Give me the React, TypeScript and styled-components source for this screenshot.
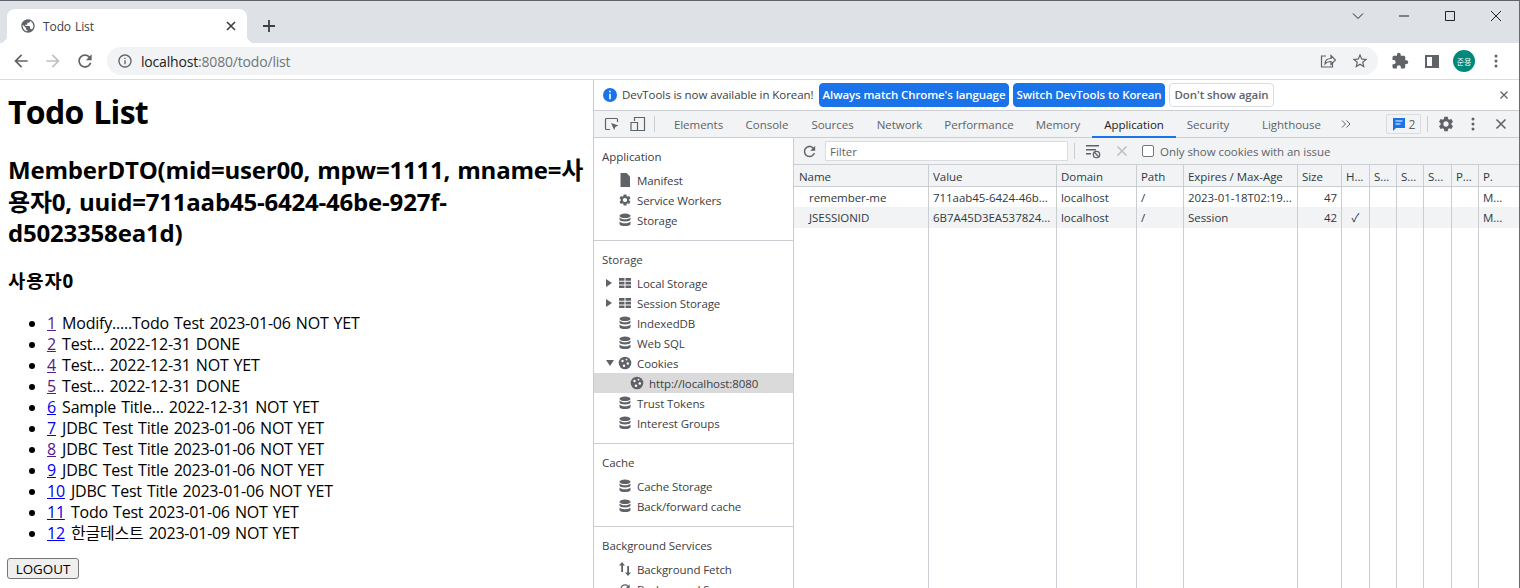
import React from "react";
import styled, { createGlobalStyle } from "styled-components";

const UI = `"Open Sans", "Noto Sans CJK KR", sans-serif`;

const Global = createGlobalStyle`
  html, body { margin: 0; padding: 0; height: 588px; overflow: hidden; background: #fff; }
  #root { height: 588px; }
`;

const Windowed = styled.div`
  height: 588px; box-sizing: border-box; display: flex; flex-direction: column; overflow: hidden;
  border-top: 1px solid #5f6368; border-right: 1px solid #6b6b6b; font-family: ${UI}; background: #fff;
`;
const TabStrip = styled.div`
  height: 42px; flex: none; background: #dee1e6; display: flex; align-items: flex-end; padding-left: 7px;
`;
const BrowserTab = styled.div`
  position: relative; width: 240px; height: 34px; box-sizing: border-box; background: #fff;
  border-radius: 8px 8px 0 0; display: flex; align-items: center; padding: 0 10px 0 13px; gap: 7px;
  &::before, &::after { content: ""; position: absolute; bottom: 0; width: 8px; height: 8px; }
  &::before { left: -8px; background: radial-gradient(circle at 0 0, #dee1e6 8px, #fff 8.5px); }
  &::after { right: -8px; background: radial-gradient(circle at 100% 0, #dee1e6 8px, #fff 8.5px); }
`;
const TabTitle = styled.span`
  flex: 1; font-size: 12px; color: #3c4043; letter-spacing: -0.1px; word-spacing: 1px;
`;
const NewTab = styled.div`
  margin: 0 0 3px 8px; width: 28px; height: 28px; display: flex; align-items: center; justify-content: center;
`;
const WinControls = styled.div`
  margin-left: auto; align-self: flex-start; display: flex;
`;
const WinBtn = styled.div`
  width: 46px; height: 30px; display: flex; align-items: center; justify-content: center;
`;
const Toolbar = styled.div`
  height: 37px; flex: none; box-sizing: border-box; display: flex; align-items: center; padding: 0 0 0 5px;
  background: #fff; border-bottom: 1px solid #dadce0;
`;
const NavBtn = styled.div`
  width: 32px; height: 28px; display: flex; align-items: center; justify-content: center; flex: none;
`;
const Omnibox = styled.div`
  margin-left: 6px; width: 1271px; height: 28px; flex: none; box-sizing: border-box; background: #f1f3f4; border-radius: 14px;
  display: flex; align-items: center; padding: 0 9px 0 10px;
`;
const Url = styled.span`
  margin-left: 8px; font-size: 14px; color: #70757a; letter-spacing: -0.18px; flex: 1;
  b { font-weight: 400; color: #202124; }
`;
const OmniIcons = styled.div`
  display: flex; align-items: center; gap: 15px;
`;
const ToolIcons = styled.div`
  flex: 1; display: flex; align-items: center; padding-left: 6px;
`;
const ToolCell = styled.div`
  width: 32px; height: 28px; flex: none; display: flex; align-items: center; justify-content: center;
`;
const Avatar = styled.div`
  width: 22px; height: 22px; border-radius: 50%; background: #00897b; color: #fff; font-size: 8px; flex: none;
  display: flex; align-items: center; justify-content: center; font-family: "Noto Sans CJK KR", sans-serif;
`;
const Main = styled.div`
  flex: 1; min-height: 0; display: flex;
`;
const PagePane = styled.div`
  width: 593px; flex: none; box-sizing: border-box; padding: 0 8px; font-family: ${UI};
  color: #000; font-size: 16px; overflow: hidden;
`;
const H1 = styled.h1`
  margin: 10px 0 0; font-size: 32px; line-height: 43px; font-weight: 700; letter-spacing: -0.7px; word-spacing: 2px;
`;
const H2 = styled.h2`
  margin: 21px 0 0; font-size: 24px; line-height: 31.7px; font-weight: 700; letter-spacing: -0.2px; word-spacing: 1px;
`;
const H3 = styled.h3`
  margin: 19px 0 0; font-size: 18.72px; line-height: 25px; font-weight: 700; letter-spacing: 1px;
`;
const List = styled.ul`
  margin: 20px 0 0; padding: 0 0 0 39px;
`;
const Item = styled.li`
  line-height: 21px; height: 21px; letter-spacing: -0.22px; word-spacing: 1.2px; white-space: nowrap;
`;
const NumLink = styled.a<{ $visited?: boolean }>`
  margin-right: 1px; color: ${(p) => (p.$visited ? "#551a8b" : "#0000ee")}; text-decoration: underline;
`;
const Logout = styled.button`
  display: block; margin: 14px 0 0 -1px; width: 72px; height: 21px; padding: 0; box-sizing: border-box;
  font-family: "Open Sans", sans-serif; font-size: 13.33px; letter-spacing: 0.05px; color: #000; background: #efefef;
  border: 1px solid #767676; border-radius: 3px;
`;
const DevTools = styled.div`
  flex: 1; min-width: 0; display: flex; flex-direction: column; border-left: 1px solid #cacdd1;
  font-size: 11.5px; color: #202124; margin-left: 0;
`;
const Infobar = styled.div`
  height: 31px; flex: none; box-sizing: border-box; border-bottom: 1px solid #cacdd1; display: flex; align-items: center; padding: 0 10px 1px 8px;
`;
const InfoText = styled.span`
  margin-left: 4px; width: 197px; color: #3c4043; font-size: 11.5px; letter-spacing: -0.07px; white-space: nowrap; flex: none;
`;
const InfoBtn = styled.div<{ $w: number; $primary?: boolean }>`
  width: ${(p) => p.$w}px; height: 24px; flex: none; margin-right: 4px; box-sizing: border-box; border-radius: 4px;
  display: flex; align-items: center; justify-content: center; white-space: nowrap; font-size: 11.5px; font-weight: 600;
  letter-spacing: -0.1px;
  background: ${(p) => (p.$primary ? "#1a73e8" : "#fff")};
  color: ${(p) => (p.$primary ? "#fff" : "#5f6368")};
  border: 1px solid ${(p) => (p.$primary ? "#1a73e8" : "#dadce0")};
`;
const InfoClose = styled.div`
  margin-left: auto; display: flex;
`;
const TabBar = styled.div`
  height: 27px; flex: none; box-sizing: border-box; background: #f1f3f4; border-bottom: 1px solid #cacdd1; display: flex; align-items: stretch; padding-left: 5px;
`;
const IconCell = styled.div<{ $w: number }>`
  width: ${(p) => p.$w}px; flex: none; display: flex; align-items: center; justify-content: center;
`;
const VSep = styled.div`
  width: 1px; height: 16px; background: #cacdd1; align-self: center; flex: none;
`;
const DTab = styled.div<{ $w: number; $active?: boolean }>`
  width: ${(p) => p.$w}px; flex: none; box-sizing: border-box; display: flex; align-items: center; justify-content: center;
  color: ${(p) => (p.$active ? "#202124" : "#5f6368")}; white-space: nowrap; letter-spacing: -0.03px;
  border-bottom: 2px solid ${(p) => (p.$active ? "#1a73e8" : "transparent")}; padding-top: 2px; margin-bottom: -1px;
`;
const Badge = styled.div`
  width: 35px; height: 20px; flex: none; align-self: center; margin-left: 31px; box-sizing: border-box; border: 1px solid #dadce0; border-radius: 2px;
  display: flex; align-items: center; justify-content: center; gap: 3px; color: #5f6368; font-size: 12px;
`;
const Panels = styled.div`
  flex: 1; min-height: 0; display: flex;
`;
const Sidebar = styled.div`
  width: 200px; flex: none; box-sizing: border-box; border-right: 1px solid #cacdd1; overflow: hidden;
`;
const Section = styled.div`
  padding-top: 9px; padding-bottom: 10px; border-bottom: 1px solid #cacdd1;
  &:last-child { border-bottom: none; }
`;
const SectionTitle = styled.div`
  height: 20px; line-height: 20px; padding-left: 8px; margin-bottom: 3px; color: #3c4043; letter-spacing: -0.05px;
`;
const TreeRow = styled.div<{ $selected?: boolean; $indent?: number }>`
  height: 20px; display: flex; align-items: center; box-sizing: border-box; color: #3c4043; white-space: nowrap; letter-spacing: -0.1px;
  padding-left: ${(p) => p.$indent ?? 24}px;
  background: ${(p) => (p.$selected ? "#dadada" : "transparent")};
`;
const Arrow = styled.div`
  width: 12px; margin-left: -12px; flex: none; display: flex; align-items: center; justify-content: flex-start;
`;
const TreeIcon = styled.div`
  width: 14px; height: 14px; margin-right: 5px; flex: none; display: flex; align-items: center; justify-content: center;
`;
const Content = styled.div`
  flex: 1; min-width: 0; display: flex; flex-direction: column;
`;
const CookieBar = styled.div`
  height: 27px; flex: none; box-sizing: border-box; background: #f1f3f4; border-bottom: 1px solid #cacdd1; display: flex; align-items: center; padding-left: 7px;
`;
const FilterInput = styled.div`
  width: 243px; height: 20px; margin-left: 7px; box-sizing: border-box; background: #fff; border: 1px solid #dadce0; display: flex; align-items: center; padding: 1px 0 0 4px; color: #5f6368; flex: none;
`;
const CheckBox = styled.span`
  width: 12px; height: 12px; box-sizing: border-box; border: 1px solid #767676; border-radius: 2px; background: #fff; flex: none; margin-left: 4px;
`;
const CheckLabel = styled.span`
  margin-left: 6px; color: #5f6368; white-space: nowrap; letter-spacing: -0.05px;
`;
const TableWrap = styled.div`
  flex: 1; min-height: 0;
`;
const Table = styled.table`
  border-collapse: separate; border-spacing: 0; table-layout: fixed; width: 100%; height: 100%;
`;
const Th = styled.th`
  height: 22px; box-sizing: border-box; padding: 1px 4px 0; background: #f1f3f4; font-weight: 400; text-align: left; color: #303942;
  border-right: 1px solid #cacdd1; border-bottom: 1px solid #cacdd1; white-space: nowrap; overflow: hidden; letter-spacing: -0.05px;
  &:first-child { padding-left: 5px; }
  &:last-child { border-right: none; }
`;
const Td = styled.td<{ $align?: string; $indent?: boolean; $alt?: boolean }>`
  height: ${(p) => (p.$alt ? 21 : 20)}px; box-sizing: border-box; padding: ${(p) => (p.$alt ? "0 4px 1px" : "1px 4px 0")}; padding-left: ${(p) => (p.$indent ? "15px" : "4px")}; color: #303942; white-space: nowrap; overflow: hidden;
  border-right: 1px solid #cacdd1; text-align: ${(p) => p.$align ?? "left"}; letter-spacing: -0.05px;
  background: ${(p) => (p.$alt ? "#f1f3f4" : "#fff")};
  &:last-child { border-right: none; }
`;
const Filler = styled.td`
  border-right: 1px solid #cacdd1;
  &:last-child { border-right: none; }
`;

const I = ({ d, s = 24, c = "#5f6368", v = 24 }: { d: string; s?: number; c?: string; v?: number }) => (
  <svg width={s} height={s} viewBox={`0 0 ${v} ${v}`} fill={c}><path d={d} /></svg>
);
const P = {
  back: "M20 11H7.83l5.59-5.59L12 4l-8 8 8 8 1.41-1.41L7.83 13H20v-2z",
  fwd: "M12 4l-1.41 1.41L16.17 11H4v2h12.17l-5.58 5.59L12 20l8-8z",
  refresh: "M17.65 6.35C16.2 4.9 14.21 4 12 4c-4.42 0-7.99 3.58-7.99 8s3.57 8 7.99 8c3.73 0 6.84-2.55 7.73-6h-2.08c-.82 2.33-3.04 4-5.65 4-3.31 0-6-2.69-6-6s2.69-6 6-6c1.66 0 3.14.69 4.22 1.78L13 11h7V4l-2.35 2.35z",
  info: "M11 7h2v2h-2zm0 4h2v6h-2zm1-9C6.48 2 2 6.48 2 12s4.48 10 10 10 10-4.48 10-10S17.52 2 12 2zm0 18c-4.41 0-8-3.59-8-8s3.59-8 8-8 8 3.59 8 8-3.59 8-8 8z",
  globe: "M12 2C6.48 2 2 6.48 2 12s4.48 10 10 10 10-4.48 10-10S17.52 2 12 2zm-1 17.93c-3.95-.49-7-3.85-7-7.93 0-.62.08-1.21.21-1.79L9 15v1c0 1.1.9 2 2 2v1.93zm6.9-2.54c-.26-.81-1-1.39-1.9-1.39h-1v-3c0-.55-.45-1-1-1H8v-2h2c.55 0 1-.45 1-1V7h2c1.1 0 2-.9 2-2v-.41c2.93 1.19 5 4.06 5 7.41 0 2.08-.8 3.97-2.1 5.39z",
  star: "M22 9.24l-7.19-.62L12 2 9.19 8.63 2 9.24l5.46 4.73L5.82 21 12 17.27 18.18 21l-1.63-7.03L22 9.24zM12 15.4l-3.76 2.27 1-4.28-3.32-2.88 4.38-.38L12 6.1l1.71 4.04 4.38.38-3.32 2.88 1 4.28L12 15.4z",
  ext: "M20.5 11H19V7c0-1.1-.9-2-2-2h-4V3.5C13 2.12 11.88 1 10.5 1S8 2.12 8 3.5V5H4c-1.1 0-1.99.9-1.99 2v3.8H3.5c1.49 0 2.7 1.21 2.7 2.7s-1.21 2.7-2.7 2.7H2V20c0 1.1.9 2 2 2h3.8v-1.5c0-1.49 1.21-2.7 2.7-2.7 1.49 0 2.7 1.21 2.7 2.7V22H17c1.1 0 2-.9 2-2v-4h1.5c1.38 0 2.5-1.12 2.5-2.5S21.88 11 20.5 11z",
  gear: "M19.14 12.94c.04-.3.06-.61.06-.94 0-.32-.02-.64-.07-.94l2.03-1.58c.18-.14.23-.41.12-.61l-1.92-3.32c-.12-.22-.37-.29-.59-.22l-2.39.96c-.5-.38-1.03-.7-1.62-.94l-.36-2.54c-.04-.24-.24-.41-.48-.41h-3.84c-.24 0-.43.17-.47.41l-.36 2.54c-.59.24-1.13.57-1.62.94l-2.39-.96c-.22-.08-.47 0-.59.22L2.74 8.87c-.12.21-.08.47.12.61l2.03 1.58c-.05.3-.09.63-.09.94s.02.64.07.94l-2.03 1.58c-.18.14-.23.41-.12.61l1.92 3.32c.12.22.37.29.59.22l2.39-.96c.5.38 1.03.7 1.62.94l.36 2.54c.05.24.24.41.48.41h3.84c.24 0 .44-.17.47-.41l.36-2.54c.59-.24 1.13-.56 1.62-.94l2.39.96c.22.08.47 0 .59-.22l1.92-3.32c.12-.22.07-.47-.12-.61l-2.01-1.58zM12 15.6c-1.98 0-3.6-1.62-3.6-3.6s1.62-3.6 3.6-3.6 3.6 1.62 3.6 3.6-1.62 3.6-3.6 3.6z",
};

const Stroke = ({ s, d, c = "#5f6368", w = 1.5, v }: { s: number; d: string; c?: string; w?: number; v?: number }) => (
  <svg width={s} height={s} viewBox={`0 0 ${v ?? s} ${v ?? s}`} fill="none" stroke={c} strokeWidth={w}><path d={d} /></svg>
);
const Db = () => (
  <svg width="14" height="14" viewBox="0 0 14 14" fill="#5f6368">
    <ellipse cx="7" cy="2.8" rx="5.5" ry="2.3" />
    <path d="M1.5 4.4c1 1.2 3 1.8 5.5 1.8s4.5-.6 5.5-1.8v2.1c0 1.2-2.4 2-5.5 2s-5.500-.8-5.500-2z" />
    <path d="M1.5 8.400c1 1.200 3 1.800 5.500 1.800s4.500-.6 5.500-1.800v2.500c0 1.300-2.400 2.100-5.500 2.100s-5.500-.8-5.500-2.100z" />
  </svg>
);
const GridIco = () => (
  <svg width="14" height="14" viewBox="0 0 14 14" fill="#5f6368">
    <path d="M1 2h5.500v2.700H1zM7.500 2H13v2.700H7.500zM1 5.700h5.500v2.700H1zM7.500 5.700H13v2.700H7.500zM1 9.400h5.500v2.700H1zM7.500 9.400H13v2.700H7.500z" />
  </svg>
);
const Doc = () => (
  <svg width="14" height="14" viewBox="0 0 14 14" fill="#5f6368"><path d="M2.500 0h6L12 3.500V14H2.500z" /></svg>
);
const SmallGear = () => <I d={P.gear} s={16} />;
const Cookie = () => (
  <svg width="14" height="14" viewBox="0 0 14 14">
    <circle cx="7" cy="7" r="6.300" fill="#5f6368" />
    <circle cx="4.500" cy="5" r="1.200" fill="#fff" /><circle cx="8.500" cy="3.600" r=".9" fill="#fff" />
    <circle cx="9.800" cy="7.500" r="1.200" fill="#fff" /><circle cx="6" cy="9.800" r="1.200" fill="#fff" />
  </svg>
);
const FetchIco = () => (
  <svg width="14" height="14" viewBox="0 0 14 14" fill="#5f6368">
    <path d="M4 0l3 3.500H5V10H3.200V3.500H1zM9.200 4H11v6.500h2L10 14l-3-3.500h2.200z" />
  </svg>
);
const SyncIco = () => <I d={P.refresh} s={14} />;
const TriR = () => <svg width="6" height="8" viewBox="0 0 6 8" fill="#5f6368"><path d="M0 0l6 4-6 4z" /></svg>;
const TriD = () => <svg width="8" height="6" viewBox="0 0 8 6" fill="#5f6368"><path d="M0 0h8L4 6z" /></svg>;
const Kebab = () => (
  <svg width="4" height="14" viewBox="0 0 4 14" fill="#5f6368"><circle cx="2" cy="2" r="1.500" /><circle cx="2" cy="7" r="1.500" /><circle cx="2" cy="12" r="1.500" /></svg>
);

const todos: [string, boolean, string][] = [
  ["1", true, "Modify.....Todo Test 2023-01-06 NOT YET"],
  ["2", true, "Test... 2022-12-31 DONE"],
  ["4", true, "Test... 2022-12-31 NOT YET"],
  ["5", true, "Test... 2022-12-31 DONE"],
  ["6", false, "Sample Title... 2022-12-31 NOT YET"],
  ["7", false, "JDBC Test Title 2023-01-06 NOT YET"],
  ["8", true, "JDBC Test Title 2023-01-06 NOT YET"],
  ["9", false, "JDBC Test Title 2023-01-06 NOT YET"],
  ["10", false, "JDBC Test Title 2023-01-06 NOT YET"],
  ["11", false, "Todo Test 2023-01-06 NOT YET"],
  ["12", false, "한글테스트 2023-01-09 NOT YET"],
];
const tabs: [string, number, boolean?][] = [
  ["Elements", 71], ["Console", 66], ["Sources", 65], ["Network", 69], ["Performance", 90],
  ["Memory", 68], ["Application", 84, true], ["Security", 64],
];
const cols = [135, 128, 80, 47, 114, 44, 28, 27, 27, 28, 27, 41];
const heads = ["Name", "Value", "Domain", "Path", "Expires / Max-Age", "Size", "H...", "S...", "S...", "S...", "P...", "P."];
const rows: (string)[][] = [
  ["remember-me", "711aab45-6424-46b...", "localhost", "/", "2023-01-18T02:19...", "47", "", "", "", "", "", "M..."],
  ["JSESSIONID", "6B7A45D3EA537824...", "localhost", "/", "Session", "42", "✓", "", "", "", "", "M..."],
];
const alignOf = (i: number) => (i === 5 ? "right" : i === 6 ? "center" : "left");

export default function App() {
  return (
    <Windowed>
      <Global />
      <TabStrip>
        <BrowserTab>
          <I d={P.globe} s={16} />
          <TabTitle>Todo List</TabTitle>
          <Stroke s={12} d="M2 2l8 8M10 2l-8 8" c="#3c4043" w={1.6} />
        </BrowserTab>
        <NewTab><Stroke s={14} d="M7 1v12M1 7h12" c="#3c4043" w={1.8} /></NewTab>
        <WinControls>
          <WinBtn><Stroke s={12} d="M1 3.500l5 5 5-5" c="#202124" w={1} /></WinBtn>
          <WinBtn><Stroke s={12} d="M1 6h10" c="#202124" w={1} /></WinBtn>
          <WinBtn><Stroke s={12} d="M1.500 1.500h9v9h-9z" c="#202124" w={1} /></WinBtn>
          <WinBtn><Stroke s={12} d="M1 1l10 10M11 1L1 11" c="#202124" w={1} /></WinBtn>
        </WinControls>
      </TabStrip>
      <Toolbar>
        <NavBtn><I d={P.back} s={20} /></NavBtn>
        <NavBtn><I d={P.fwd} s={20} c="#bdc1c6" /></NavBtn>
        <NavBtn><I d={P.refresh} s={20} /></NavBtn>
        <Omnibox>
          <I d={P.info} s={16} />
          <Url><b>localhost</b>:8080/todo/list</Url>
          <OmniIcons>
            <Stroke s={16} d="M6 3H1.500v11h11V9M5 11c0-3.500 2.500-5.500 6-5.500V2.500l4.500 4.500L11 11.500V8.500C8.500 8.500 6.500 9 5 11z" w={1.2} />
            <I d={P.star} s={18} />
          </OmniIcons>
        </Omnibox>
        <ToolIcons>
          <ToolCell><I d={P.ext} s={18} /></ToolCell>
          <ToolCell>
            <svg width="14" height="13" viewBox="0 0 14 13"><path d="M0 0h14v13H0z" fill="#5f6368" /><path d="M2 2h5v9H2z" fill="#fff" /></svg>
          </ToolCell>
          <ToolCell><Avatar>준용</Avatar></ToolCell>
          <ToolCell><Kebab /></ToolCell>
        </ToolIcons>
      </Toolbar>
      <Main>
        <PagePane>
          <H1>Todo List</H1>
          <H2>MemberDTO(mid=user00, mpw=1111, mname=사용자0, uuid=711aab45-6424-46be-927f-d5023358ea1d)</H2>
          <H3>사용자0</H3>
          <List>
            {todos.map(([n, v, t]) => (
              <Item key={n}><NumLink href="#" $visited={v}>{n}</NumLink> {t}</Item>
            ))}
          </List>
          <Logout>LOGOUT</Logout>
        </PagePane>
        <DevTools>
          <Infobar>
            <svg width="16" height="16" viewBox="0 0 16 16"><circle cx="8" cy="8" r="7" fill="#1a73e8" /><path d="M7.200 3.700h1.600v1.600H7.200zM7.200 6.800h1.600v5.500H7.200z" fill="#fff" /></svg>
            <InfoText>DevTools is now available in Korean!</InfoText>
            <InfoBtn $primary $w={190}>Always match Chrome's language</InfoBtn>
            <InfoBtn $primary $w={152}>Switch DevTools to Korean</InfoBtn>
            <InfoBtn $w={105}>Don't show again</InfoBtn>
            <InfoClose><Stroke s={10} d="M1.500 1.500l7 7M8.500 1.500l-7 7" w={1.3} /></InfoClose>
          </Infobar>
          <TabBar>
            <IconCell $w={26}>
              <svg width="16" height="16" viewBox="0 0 16 16" fill="none" stroke="#5f6368" strokeWidth="1.200"><path d="M6 13.500H2.500a1 1 0 0 1-1-1v-9a1 1 0 0 1 1-1h10a1 1 0 0 1 1 1V6" /><path d="M7 7l7.500 2.500-3 1.300-1.300 3.200z" fill="#5f6368" stroke="none" /></svg>
            </IconCell>
            <IconCell $w={26}>
              <svg width="18" height="18" viewBox="0 0 18 18" fill="none" stroke="#5f6368" strokeWidth="1.200"><path d="M5.500 6V2.500h10v13H9" /><path d="M2 7.500h6.500v8H2z" /></svg>
            </IconCell>
            <IconCell $w={6}><VSep /></IconCell>
            <IconCell $w={6} />
            {tabs.map(([t, w, a]) => (
              <DTab key={t} $w={w} $active={a}>{t}</DTab>
            ))}
            <IconCell $w={6} />
            <DTab $w={91}>Lighthouse</DTab>
            <IconCell $w={18}><Stroke s={12} d="M2 2.500l3.500 3.500L2 9.500M6.500 2.500L10 6l-3.500 3.500" w={1} /></IconCell>
            <Badge>
              <svg width="14" height="14" viewBox="0 0 14 14"><path d="M1 1h12v10H4l-3 3z" fill="#1a73e8" /><path d="M3.500 4h7M3.500 7h5" stroke="#fff" strokeWidth="1.200" /></svg>
              2
            </Badge>
            <IconCell $w={12}><VSep /></IconCell>
            <IconCell $w={26}><I d={P.gear} s={18} /></IconCell>
            <IconCell $w={28}><Kebab /></IconCell>
            <IconCell $w={28}><Stroke s={12} d="M1.500 1.500l9 9M10.500 1.500l-9 9" w={1.6} /></IconCell>
          </TabBar>
          <Panels>
            <Sidebar>
              <Section>
                <SectionTitle>Application</SectionTitle>
                <TreeRow><TreeIcon><Doc /></TreeIcon>Manifest</TreeRow>
                <TreeRow><TreeIcon><SmallGear /></TreeIcon>Service Workers</TreeRow>
                <TreeRow><TreeIcon><Db /></TreeIcon>Storage</TreeRow>
              </Section>
              <Section>
                <SectionTitle>Storage</SectionTitle>
                <TreeRow><Arrow><TriR /></Arrow><TreeIcon><GridIco /></TreeIcon>Local Storage</TreeRow>
                <TreeRow><Arrow><TriR /></Arrow><TreeIcon><GridIco /></TreeIcon>Session Storage</TreeRow>
                <TreeRow><TreeIcon><Db /></TreeIcon>IndexedDB</TreeRow>
                <TreeRow><TreeIcon><Db /></TreeIcon>Web SQL</TreeRow>
                <TreeRow><Arrow><TriD /></Arrow><TreeIcon><Cookie /></TreeIcon>Cookies</TreeRow>
                <TreeRow $selected $indent={36}><TreeIcon><Cookie /></TreeIcon>http://localhost:8080</TreeRow>
                <TreeRow><TreeIcon><Db /></TreeIcon>Trust Tokens</TreeRow>
                <TreeRow><TreeIcon><Db /></TreeIcon>Interest Groups</TreeRow>
              </Section>
              <Section>
                <SectionTitle>Cache</SectionTitle>
                <TreeRow><TreeIcon><Db /></TreeIcon>Cache Storage</TreeRow>
                <TreeRow><TreeIcon><Db /></TreeIcon>Back/forward cache</TreeRow>
              </Section>
              <Section>
                <SectionTitle>Background Services</SectionTitle>
                <TreeRow><TreeIcon><FetchIco /></TreeIcon>Background Fetch</TreeRow>
                <TreeRow><TreeIcon><SyncIco /></TreeIcon>Background Sync</TreeRow>
              </Section>
            </Sidebar>
            <Content>
              <CookieBar>
                <I d={P.refresh} s={17} />
                <FilterInput>Filter</FilterInput>
                <IconCell $w={13}><VSep /></IconCell>
                <IconCell $w={24}>
                  <svg width="16" height="16" viewBox="0 0 16 16" fill="#5f6368"><path d="M1 2h13v1.500H1zM1 6h10v1.500H1zM1 10h5v1.500H1z" /><circle cx="11.500" cy="11.500" r="3.200" fill="none" stroke="#5f6368" strokeWidth="1.300" /><path d="M9.300 9.300l4.400 4.400" stroke="#5f6368" strokeWidth="1.300" /></svg>
                </IconCell>
                <IconCell $w={33}><Stroke s={12} d="M1.500 1.500l9 9M10.500 1.500l-9 9" c="#bdc1c6" w={1.6} /></IconCell>
                <CheckBox />
                <CheckLabel>Only show cookies with an issue</CheckLabel>
              </CookieBar>
              <TableWrap>
                <Table>
                  <colgroup>{cols.map((w, i) => <col key={i} style={{ width: w }} />)}</colgroup>
                  <thead><tr>{heads.map((h, i) => <Th key={i}>{h}</Th>)}</tr></thead>
                  <tbody>
                    {rows.map((r, ri) => (
                      <tr key={ri}>
                        {r.map((c, i) => <Td key={i} $alt={ri === 1} $indent={i === 0} $align={alignOf(i)}>{c}</Td>)}
                      </tr>
                    ))}
                    <tr>{cols.map((_, i) => <Filler key={i} />)}</tr>
                  </tbody>
                </Table>
              </TableWrap>
            </Content>
          </Panels>
        </DevTools>
      </Main>
    </Windowed>
  );
}
